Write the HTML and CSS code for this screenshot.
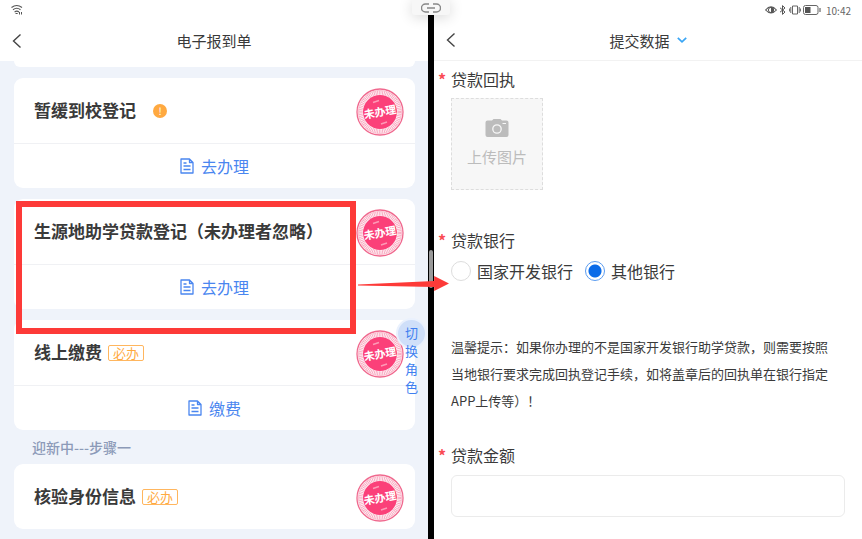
FILE: index.html
```html
<!DOCTYPE html>
<html lang="zh-CN">
  <head>
    <meta charset="UTF-8" />
    <meta name="viewport" content="width=device-width, initial-scale=1.0" />
    <title>电子报到单</title>
    <link rel="stylesheet" href="styles.css">
  </head>
  <body>
    <!-- shared shapes -->
    <svg class="defs" width="0" height="0" aria-hidden="true">
      <symbol id="icon-back" viewBox="0 0 10 16">
        <path d="M8.500 1.500L1.500 8l7 6.500" fill="none" stroke="#444" stroke-width="1.400" />
      </symbol>
      <symbol id="icon-doc" viewBox="0 0 14 16">
        <path d="M1 1h8.500L13 4.500V15H1z M9.500 1v3.500H13 M3.500 5h3 M3.500 8h7 M3.500 11.500h7" fill="none" stroke="#4a86f0" stroke-width="1.300" stroke-linejoin="round" />
      </symbol>
      <symbol id="stamp" viewBox="0 0 48 48">
        <circle cx="24" cy="24" r="23" fill="#fff" stroke="#f0688e" stroke-width="1.300" />
        <circle cx="24" cy="24" r="19.500" fill="none" stroke="#f9a9c0" stroke-width="4.500" stroke-dasharray="1 .7" />
        <circle cx="24" cy="24" r="21.500" fill="none" stroke="#fbc3d2" stroke-width="1" />
        <circle cx="24" cy="24" r="17" fill="#fb4079" />
        <path d="M17 14.500l6-2M25 36l6-2" stroke="#fd9ab6" stroke-width="1.500" />
      </symbol>
    </svg>

    <div class="screen">
      <section class="pane pane-left">
        <div class="status-bar">
          <svg width="12" height="12" viewBox="0 0 12 12">
            <path d="M.5 3.500q5.200-4 10.500 0M2 5.800q3.800-3 7.500 0M3.600 8q2.200-1.700 4.400 0" fill="none" stroke="#555" stroke-width="1.100" />
            <path d="M4.500 9.500h2.200M8.500 8v2.500M10.500 8v2.500" stroke="#555" stroke-width="1" />
          </svg>
        </div>
        <header class="nav-bar">
          <button class="back" aria-label="返回"><svg width="10" height="16"><use href="#icon-back" /></svg></button>
          <h1>电子报到单</h1>
        </header>

        <main class="list">
          <div class="card-end"></div>
          <article class="card">
            <div class="card-head">
              <h2>暂缓到校登记</h2>
              <span class="info">!</span>
              <svg class="stamp" viewBox="0 0 48 48"><use href="#stamp" /><text x="24" y="28" transform="rotate(-10 24 24)">未办理</text></svg>
            </div>
            <a class="card-action" href="#"><svg width="14" height="16"><use href="#icon-doc" /></svg>去办理</a>
          </article>

          <article class="card">
            <div class="card-head">
              <h2>生源地助学贷款登记（未办理者忽略）</h2>
              <svg class="stamp" viewBox="0 0 48 48"><use href="#stamp" /><text x="24" y="28" transform="rotate(-10 24 24)">未办理</text></svg>
            </div>
            <a class="card-action" href="#"><svg width="14" height="16"><use href="#icon-doc" /></svg>去办理</a>
          </article>

          <article class="card">
            <div class="card-head">
              <h2>线上缴费</h2>
              <span class="tag">必办</span>
              <svg class="stamp" viewBox="0 0 48 48"><use href="#stamp" /><text x="24" y="28" transform="rotate(-10 24 24)">未办理</text></svg>
            </div>
            <a class="card-action" href="#"><svg width="14" height="16"><use href="#icon-doc" /></svg>缴费</a>
          </article>

          <h3 class="step">迎新中---步骤一</h3>

          <article class="card">
            <div class="card-head">
              <h2>核验身份信息</h2>
              <span class="tag">必办</span>
              <svg class="stamp" viewBox="0 0 48 48"><use href="#stamp" /><text x="24" y="28" transform="rotate(-10 24 24)">未办理</text></svg>
            </div>
          </article>
        </main>

        <button class="switch-role">切换角色</button>
      </section>

      <div class="divider">
        <div class="link-tab">
          <svg width="20" height="10" viewBox="0 0 20 10">
            <path d="M8 1H4.500a4 4 0 0 0 0 8H8M12 1h3.500a4 4 0 0 1 0 8H12M6 5h8" fill="none" stroke="#888" stroke-width="1.400" />
          </svg>
        </div>
        <div class="handle"></div>
      </div>

      <section class="pane pane-right">
        <div class="status-bar status-right">
          <svg width="12" height="10" viewBox="0 0 12 10">
            <path d="M.6 5Q6-1.500 11.400 5Q6 11 .6 5z" fill="none" stroke="#555" stroke-width="1.100" />
            <path d="M6 2a3 3 0 0 1 0 6z" fill="#555" />
            <circle cx="6" cy="5" r="2.600" fill="none" stroke="#555" />
          </svg>
          <svg width="8" height="10" viewBox="0 0 8 10">
            <path d="M1 2.800l5 4.200-2.500 2.400V.6L6 3 1 7.200" fill="none" stroke="#555" stroke-width="1" />
          </svg>
          <svg width="12" height="10" viewBox="0 0 12 10">
            <path d="M3.500 1h5v8h-5zM1.800 2v6M10.200 2v6M.4 3.500v3M11.600 3.500v3" fill="none" stroke="#555" stroke-width=".9" />
          </svg>
          <svg width="18" height="10" viewBox="0 0 18 10">
            <rect x=".5" y=".5" width="14.500" height="9" rx="2" fill="none" stroke="#666" />
            <rect x="2" y="2" width="5.500" height="6" fill="#555" />
            <path d="M17 3v4" stroke="#666" stroke-width="1.200" />
          </svg>
          <time>10:42</time>
        </div>
        <header class="nav-bar nav-line">
          <button class="back" aria-label="返回"><svg width="10" height="16"><use href="#icon-back" /></svg></button>
          <h1>提交数据
            <svg width="10" height="6" viewBox="0 0 10 6"><path d="M.8.8L5 4.800 9.200.8" fill="none" stroke="#39a5f5" stroke-width="1.700" /></svg>
          </h1>
        </header>

        <form class="form">
          <div class="field">
            <span class="label">贷款回执</span>
            <button type="button" class="upload">
              <svg width="24" height="20" viewBox="0 0 24 20">
                <path d="M2.500 2.500H7L8.500 1h7L17 2.500h4.500a2 2 0 0 1 2 2V17a2 2 0 0 1-2 2h-19a2 2 0 0 1-2-2V4.500a2 2 0 0 1 2-2z" fill="#bcbcbc" />
                <circle cx="12" cy="11" r="4.200" fill="none" stroke="#f7f7f7" stroke-width="1.300" />
                <path d="M17.500 5.500h3.500" stroke="#f7f7f7" />
              </svg>
              上传图片
            </button>
          </div>

          <fieldset class="field bank">
            <legend class="label">贷款银行</legend>
            <div class="radios">
              <label><input type="radio" name="bank" />国家开发银行</label>
              <label><input type="radio" name="bank" checked />其他银行</label>
            </div>
          </fieldset>

          <p class="tip">
            温馨提示：如果你办理的不是国家开发银行助学贷款，则需要按照<br />当地银行要求完成回执登记手续，如将盖章后的回执单在银行指定<br />APP上传等）！
          </p>

          <div class="field">
            <label class="label" for="amount">贷款金额</label>
            <input type="text" class="amount" id="amount" />
          </div>
        </form>
      </section>

      <!-- red marks over the two panes -->
      <div class="mark-box"></div>
      <svg class="mark-arrow" width="91" height="16" viewBox="0 0 92 16">
        <path d="M0 8.600L77 5V0l15 7.500L77 15v-4L0 9.400z" fill="#fd3a38" />
      </svg>
    </div>
  </body>
</html>
```

FILE: styles.css
```css
* {
  box-sizing: border-box;
}
body {
  margin: 0;
  font-family: "Noto Sans CJK SC", sans-serif;
  color: #3a3a3a;
  background: white;
}
h1,
h2,
h3,
p {
  margin: 0;
}
button {
  border: none;
  padding: 0;
  background: none;
  font-family: inherit;
  cursor: pointer;
}
svg {
  display: block;
  flex: none;
}
.defs {
  position: absolute;
}
.screen {
  position: relative;
  display: grid;
  grid-template-columns: 1fr 6px 1fr;
  min-height: 100vh;
}
.pane {
  position: relative;
  min-width: 0;
}
.pane-left {
  background: #eff3fa;
}

/* top bars */
.status-bar {
  display: flex;
  align-items: center;
  height: 20px;
  padding: 0 11px;
  background: white;
}
.status-right {
  justify-content: flex-end;
  gap: 2px;
}
.status-right time {
  margin-left: 3px;
  font-size: 10px;
  color: #666;
}
.nav-bar {
  display: grid;
  grid-template-columns: 10px 1fr 10px;
  align-items: center;
  height: 41px;
  padding: 0 12px;
  background: white;
}
.nav-line {
  border-bottom: 1px solid #f2f2f2;
}
.nav-bar h1 {
  display: flex;
  justify-content: center;
  align-items: center;
  gap: 7px;
  font-size: 15px;
  font-weight: normal;
}

/* cards */
.list {
  padding: 0 13px 0 14px;
}
.card-end {
  height: 6px;
  margin-bottom: 11px;
  background: white;
  border-radius: 0 0 8px 8px;
}
.card {
  background: white;
  border-radius: 9px;
}
.card + .card {
  margin-top: 11px;
}
.card-head {
  display: flex;
  align-items: center;
  height: 65px;
  padding: 0 11px 0 20px;
}
.card-head h2 {
  font-size: 17px;
  font-weight: bold;
  line-height: 24px;
  padding-bottom: 1px;
  white-space: nowrap;
}
.stamp {
  width: 48px;
  height: 48px;
  margin-top: 3px;
  margin-left: auto;
}
.stamp text {
  font-size: 11px;
  font-weight: bold;
  text-anchor: middle;
  fill: white;
}
.info {
  width: 14px;
  height: 14px;
  margin-left: 17px;
  border-radius: 50%;
  background: #ffa940;
  color: white;
  font-size: 10px;
  line-height: 14px;
  text-align: center;
}
.tag {
  margin-left: 6px;
  padding: 0 4px;
  border: 1px solid #ffb65e;
  border-radius: 2px;
  color: #ffa940;
  font-size: 13px;
  line-height: 14px;
}
.card-action {
  display: flex;
  justify-content: center;
  align-items: center;
  gap: 7px;
  height: 45px;
  border-top: 1px solid #f0f1f4;
  color: #4a86f0;
  font-size: 16px;
  text-decoration: none;
}
.step {
  padding-left: 18px;
  color: #8c9ab8;
  font-size: 14px;
  font-weight: 500;
  line-height: 34px;
}
.switch-role {
  position: absolute;
  top: 318px;
  right: 1px;
  width: 31px;
  height: 31px;
  padding: 4px 7px 0;
  display: flex;
  align-items: flex-start;
  border: 2px solid #eaf1fd;
  border-radius: 50%;
  background: #cfdff9;
  color: #3f7ff0;
  font-size: 13px;
  line-height: 18px;
  word-break: break-all;
}

/* split bar */
.divider {
  position: relative;
  background: black;
}
.link-tab {
  position: absolute;
  top: 0;
  left: -16px;
  z-index: 1;
  display: flex;
  justify-content: center;
  align-items: center;
  width: 38px;
  height: 15px;
  border-radius: 0 0 3px 3px;
  background: #f7f7f7;
  box-shadow: 0 2px 14px rgba(0, 0, 0, 0.16);
}
.handle {
  position: absolute;
  top: 250px;
  left: 1px;
  width: 4px;
  height: 38px;
  border-radius: 2px;
  background: #999;
}

/* form */
.form {
  padding: 6px 17px 22px;
}
.field {
  margin: 0;
  padding: 0;
  border: none;
}
.label {
  position: relative;
  display: block;
  padding: 0;
  font-size: 16px;
  line-height: 24px;
}
.label::before {
  content: "*";
  position: absolute;
  left: -13px;
  color: #fa4b55;
  font-weight: bold;
}
.upload {
  display: flex;
  flex-direction: column;
  justify-content: center;
  align-items: center;
  gap: 8px;
  width: 92px;
  height: 92px;
  margin-top: 7px;
  padding-bottom: 4px;
  border: 1px dashed #ddd;
  background: #f7f7f7;
  color: #bcbcbc;
  font-size: 15px;
}
.bank {
  margin-top: 38px;
}
.radios {
  display: flex;
  gap: 12px;
  padding-top: 7px;
}
.radios label {
  display: flex;
  align-items: center;
  gap: 6px;
  font-size: 16px;
  line-height: 24px;
}
.radios input {
  appearance: none;
  width: 20px;
  height: 20px;
  margin: 0;
  border: 1px solid #ddd;
  border-radius: 50%;
}
.radios input:checked {
  border-color: #5b9cf0;
  background: radial-gradient(circle, #0a6be8 6px, white 7px);
}
.tip {
  margin-top: 50px;
  font-size: 13px;
  line-height: 27px;
  white-space: nowrap;
}
.tip + .field {
  margin-top: 29px;
}
.amount {
  display: block;
  width: 100%;
  height: 42px;
  margin-top: 8px;
  padding: 0 12px;
  border: 1px solid #ebebeb;
  border-radius: 6px;
  font-size: 16px;
}

/* marks */
.mark-box {
  position: absolute;
  top: 201px;
  left: 16px;
  width: 340px;
  height: 133px;
  border: 6px solid #fd3a38;
  pointer-events: none;
}
.mark-arrow {
  position: absolute;
  top: 276px;
  left: 358px;
}
```
